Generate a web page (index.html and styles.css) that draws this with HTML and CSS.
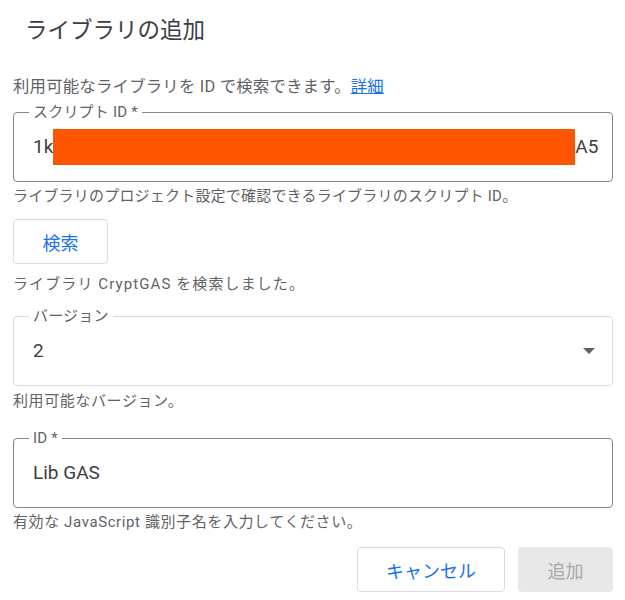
FILE: index.html
```html
<!DOCTYPE html>
<html lang="ja">
<head>
<meta charset="utf-8">
<link rel="stylesheet" href="styles.css">
</head>
<body>
<div class="dialog">
  <h1 class="title">ライブラリの追加</h1>
  <div class="content">
    <p class="intro">利用可能なライブラリを ID で検索できます。<a href="#" class="link">詳細</a></p>

    <div class="field field-strong">
      <span class="label">スクリプト ID *</span>
      <div class="value">1k<span class="redact"></span>A5</div>
    </div>
    <p class="helper">ライブラリのプロジェクト設定で確認できるライブラリのスクリプト ID。</p>

    <button class="btn btn-search">検索</button>
    <p class="status">ライブラリ CryptGAS を検索しました。</p>

    <div class="field field-light">
      <span class="label">バージョン</span>
      <div class="value">2</div>
      <span class="arrow"></span>
    </div>
    <p class="helper helper-wide">利用可能なバージョン。</p>

    <div class="field field-strong field-id">
      <span class="label">ID *</span>
      <div class="value">Lib GAS</div>
    </div>
    <p class="helper helper-wide">有効な JavaScript 識別子名を入力してください。</p>

    <div class="actions">
      <button class="btn btn-cancel">キャンセル</button>
      <button class="btn btn-add" disabled>追加</button>
    </div>
  </div>
</div>
</body>
</html>
```

FILE: styles.css
```css
html, body {
  margin: 0;
  padding: 0;
  background: #ffffff;
}

body {
  font-family: "Roboto", "Noto Sans CJK JP", sans-serif;
  color: #202124;
}

.dialog {
  width: 625px;
}

.title {
  margin: 0;
  padding: 15px 0 0 25px;
  font-size: 22.5px;
  line-height: 30px;
  font-weight: 400;
  color: #3c4043;
}

.content {
  padding: 30px 12px 0 13px;
  display: flex;
  flex-direction: column;
}

.intro {
  margin: 0;
  font-size: 16.4px;
  line-height: 24px;
  letter-spacing: 0.2px;
  color: #5f6368;
}

.link {
  color: #1a73e8;
  text-decoration: underline;
}

.field {
  position: relative;
  height: 70px;
  box-sizing: border-box;
  border-radius: 4px;
  display: flex;
  align-items: center;
  padding: 0 17px 0 19px;
  margin-top: 13px;
}

.field-strong {
  border: 1px solid #80868b;
}

.field-light {
  border: 1px solid #dadce0;
  margin-top: 22px;
}

.field-id {
  margin-top: 27px;
}

.label {
  position: absolute;
  top: -11px;
  left: 15px;
  padding: 0 4px;
  background: #ffffff;
  font-size: 15px;
  line-height: 20px;
  letter-spacing: 0.2px;
  color: #5f6368;
}

.value {
  font-size: 19px;
  line-height: 24px;
  color: #3c4043;
  display: flex;
  align-items: center;
}

.redact {
  display: inline-block;
  width: 522px;
  height: 36px;
  background: #ff5500;
}

.arrow {
  margin-left: auto;
  width: 0;
  height: 0;
  border-left: 6px solid transparent;
  border-right: 6px solid transparent;
  border-top: 6px solid #5f6368;
}

.helper, .status {
  margin: 4px 0 0;
  font-size: 15px;
  line-height: 20px;
  letter-spacing: 0.2px;
  color: #5f6368;
}

.helper-wide {
  letter-spacing: 0.6px;
}

.field-light + .helper {
  margin-top: 5px;
}

.status {
  margin-top: 10px;
  letter-spacing: 1.1px;
}

.btn {
  font-family: "Roboto", "Noto Sans CJK JP", sans-serif;
  font-size: 18px;
  height: 45px;
  border-radius: 4px;
  background: #ffffff;
  border: 1px solid #dadce0;
  color: #1a73e8;
  padding: 0;
  box-sizing: border-box;
}

.btn-search {
  width: 95px;
  margin-top: 13px;
  align-self: flex-start;
}

.actions {
  display: flex;
  justify-content: flex-end;
  gap: 13px;
  margin-top: 15px;
}

.btn-cancel {
  width: 148px;
}

.btn-add {
  width: 95px;
  background: #e8e8e8;
  border-color: #e8e8e8;
  color: #a8a8a8;
}
```
